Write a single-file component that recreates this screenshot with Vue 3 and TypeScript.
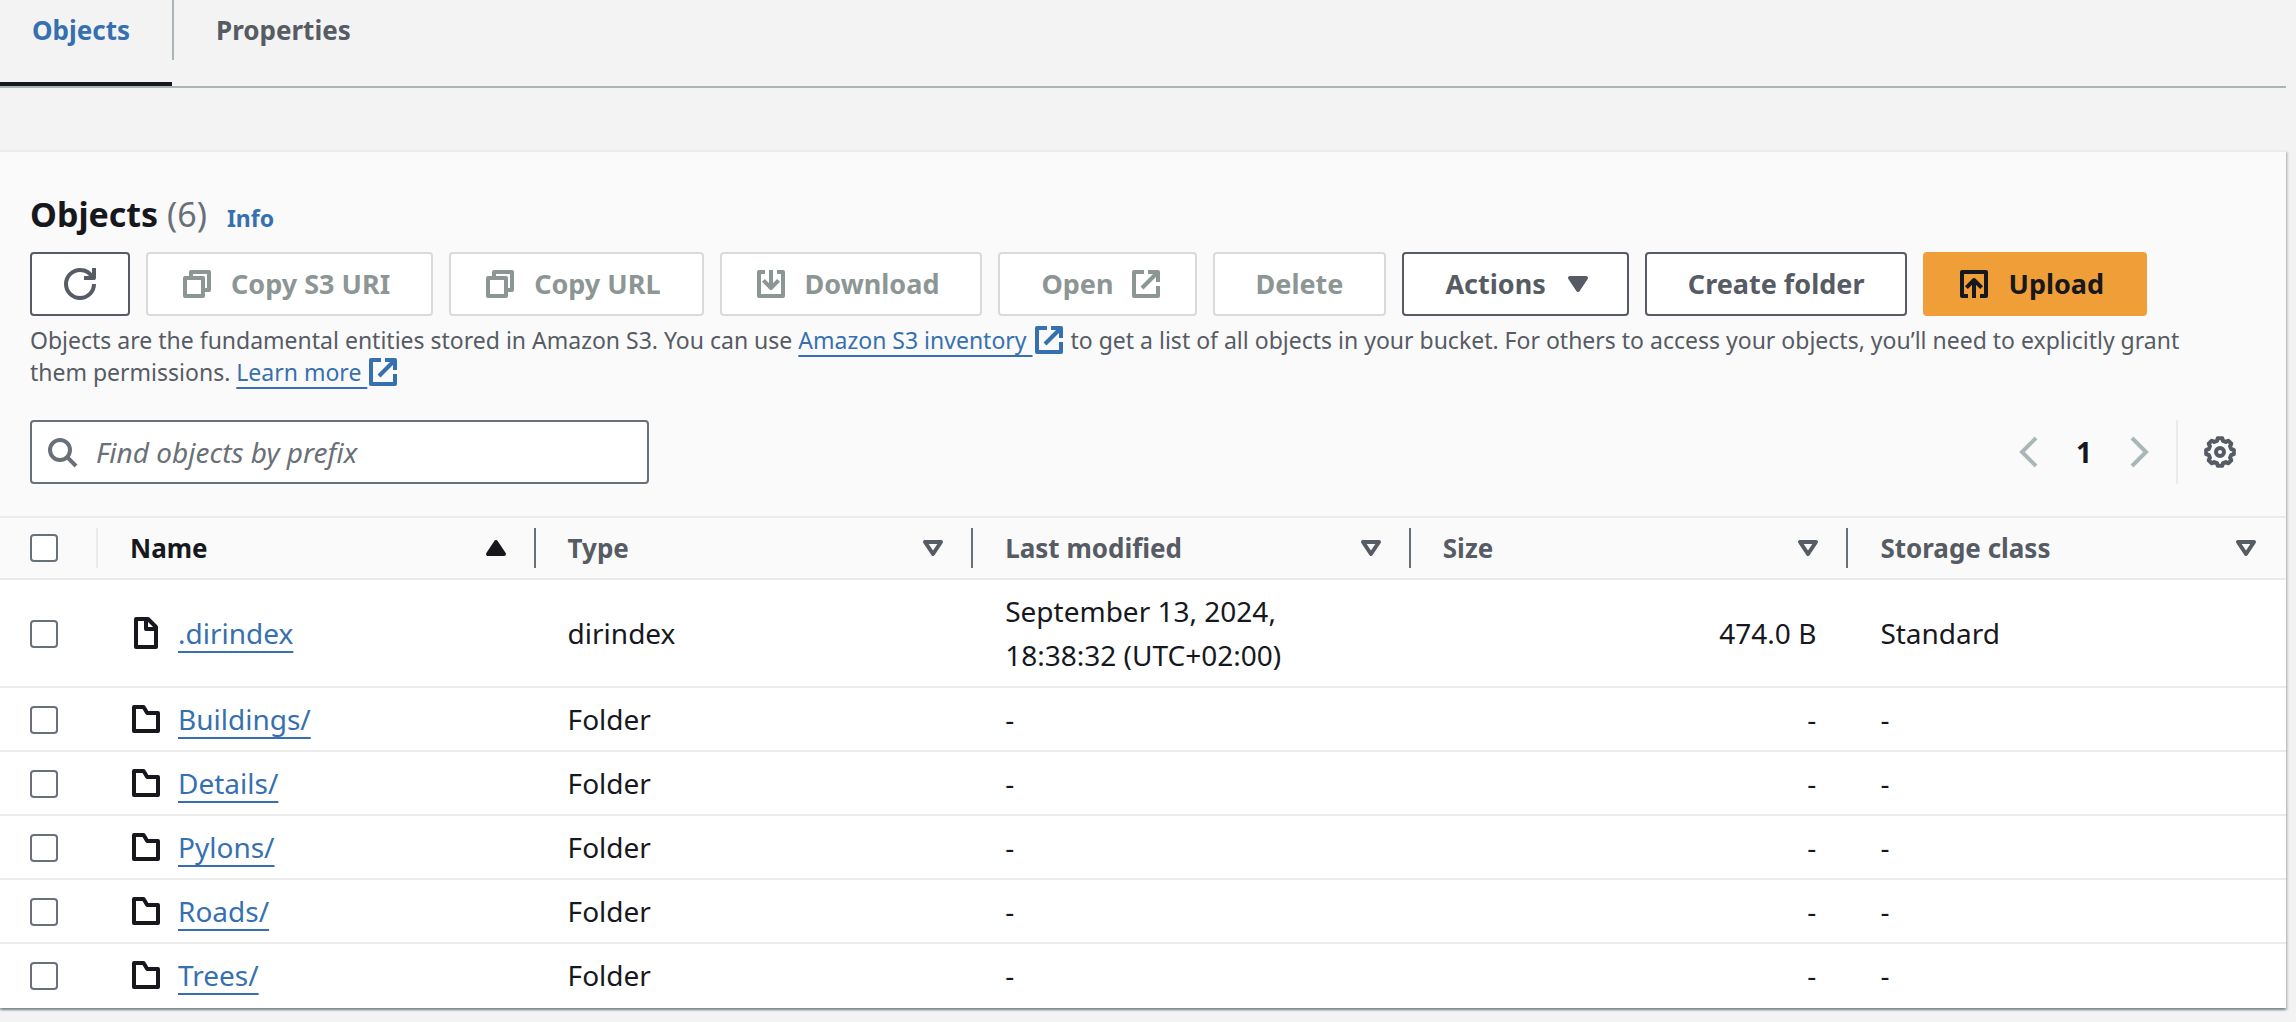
<script setup lang="ts">
import { ref } from 'vue'

interface Shape {
  d: string
  fill?: boolean
}

interface Action {
  label: string
  icon?: string
  trailing?: string
  kind: 'normal' | 'primary'
  disabled?: boolean
}

interface S3Object {
  name: string
  icon: 'file' | 'folder'
  type: string
  modified: string
  size: string
  storage: string
}

/** Outline of an eight-toothed gear centred in the 16-unit icon box. */
function gearPath(): string {
  const points: string[] = []
  const add = (radius: number, degrees: number) => {
    const a = (degrees * Math.PI) / 180
    points.push(`${(8 + radius * Math.cos(a)).toFixed(2)} ${(8 + radius * Math.sin(a)).toFixed(2)}`)
  }
  for (let k = 0; k < 8; k++) {
    const c = k * 45
    add(5.8, c - 15)
    add(7, c - 9)
    add(7, c + 9)
    add(5.8, c + 15)
  }
  return `M${points.join('L')}Z`
}

const icons: Record<string, Shape[]> = {
  refresh: [
    { d: 'M10 5h5V0' },
    { d: 'M15 8a7 7 0 0 1-7 7 7 7 0 0 1-7-7 7 7 0 0 1 7-7 6.9 6.9 0 0 1 6.3 4' },
  ],
  copy: [{ d: 'M2 5h9v9H2z' }, { d: 'M5 5V2h9v9h-3' }],
  download: [{ d: 'M5 2H2v12h12V2h-3' }, { d: 'M8 1v9' }, { d: 'M4.2 6.2 8 10l3.8-3.8' }],
  upload: [{ d: 'M5 14H2V2h12v12h-3' }, { d: 'M8 15V6' }, { d: 'M4.2 9.8 8 6l3.8 3.8' }],
  external: [{ d: 'M7 2H2v12h12V9' }, { d: 'M9 2h5v5' }, { d: 'M6 10l8-8' }],
  caret: [{ d: 'M4 5h8l-4 6z', fill: true }],
  search: [{ d: 'M12 7A5 5 0 1 1 2 7a5 5 0 0 1 10 0z' }, { d: 'M10.6 10.6 15 15' }],
  gear: [{ d: gearPath() }, { d: 'M10 8a2 2 0 1 1-4 0 2 2 0 0 1 4 0z' }],
  prev: [{ d: 'M12 1 5 8l7 7' }],
  next: [{ d: 'M4 1l7 7-7 7' }],
  file: [{ d: 'M3 1h6l4 4v10H3z' }, { d: 'M8 1v5h5' }],
  folder: [{ d: 'M2 2h4.8L8.6 5H14v9H2z' }],
  ascending: [{ d: 'M4 11h8L8 5z', fill: true }],
  sortable: [{ d: 'M4 5h8l-4 6z' }],
}

const tabs = ['Objects', 'Properties']
const activeTab = ref('Objects')

const actions: Action[] = [
  { label: 'Copy S3 URI', icon: 'copy', kind: 'normal', disabled: true },
  { label: 'Copy URL', icon: 'copy', kind: 'normal', disabled: true },
  { label: 'Download', icon: 'download', kind: 'normal', disabled: true },
  { label: 'Open', trailing: 'external', kind: 'normal', disabled: true },
  { label: 'Delete', kind: 'normal', disabled: true },
  { label: 'Actions', trailing: 'caret', kind: 'normal' },
  { label: 'Create folder', kind: 'normal' },
  { label: 'Upload', icon: 'upload', kind: 'primary' },
]

const columns = ['Name', 'Type', 'Last modified', 'Size', 'Storage class']

const folder = (name: string): S3Object => ({
  name,
  icon: 'folder',
  type: 'Folder',
  modified: '-',
  size: '-',
  storage: '-',
})

const objects: S3Object[] = [
  {
    name: '.dirindex',
    icon: 'file',
    type: 'dirindex',
    modified: 'September 13, 2024, 18:38:32 (UTC+02:00)',
    size: '474.0 B',
    storage: 'Standard',
  },
  folder('Buildings/'),
  folder('Details/'),
  folder('Pylons/'),
  folder('Roads/'),
  folder('Trees/'),
]

const query = ref('')
</script>

<template>
  <div class="page">
    <nav class="tabs">
      <a
        v-for="tab in tabs"
        :key="tab"
        href="#"
        class="tab"
        :class="{ active: tab === activeTab }"
        @click.prevent="activeTab = tab"
      >
        <span class="tab-label">{{ tab }}</span>
      </a>
    </nav>

    <main class="card">
      <header class="card-header">
        <div class="title-row">
          <h2>Objects <span class="count">(6)</span></h2>
          <a href="#" class="info">Info</a>
        </div>

        <div class="actions">
          <button type="button" class="btn refresh" aria-label="Refresh">
            <svg class="icon" viewBox="0 0 16 16">
              <path v-for="s in icons.refresh" :key="s.d" :d="s.d" />
            </svg>
          </button>
          <button
            v-for="action in actions"
            :key="action.label"
            type="button"
            class="btn"
            :class="action.kind"
            :disabled="action.disabled"
          >
            <svg v-if="action.icon" class="icon leading" viewBox="0 0 16 16">
              <path v-for="s in icons[action.icon]" :key="s.d" :d="s.d" :class="{ solid: s.fill }" />
            </svg>
            <span>{{ action.label }}</span>
            <svg v-if="action.trailing" class="icon trailing" viewBox="0 0 16 16">
              <path v-for="s in icons[action.trailing]" :key="s.d" :d="s.d" :class="{ solid: s.fill }" />
            </svg>
          </button>
        </div>

        <p class="description">
          Objects are the fundamental entities stored in Amazon S3. You can use
          <a href="#" class="external"><span>Amazon S3 inventory&nbsp;</span><svg class="icon" viewBox="0 0 16 16"><path v-for="s in icons.external" :key="s.d" :d="s.d" /></svg></a>
          to get a list of all objects in your bucket. For others to access your objects, you’ll need to explicitly
          grant them permissions.
          <a href="#" class="external"><span>Learn more&nbsp;</span><svg class="icon" viewBox="0 0 16 16"><path v-for="s in icons.external" :key="s.d" :d="s.d" /></svg></a>
        </p>

        <div class="tools">
          <label class="search">
            <svg class="icon" viewBox="0 0 16 16">
              <path v-for="s in icons.search" :key="s.d" :d="s.d" />
            </svg>
            <input v-model="query" type="text" placeholder="Find objects by prefix" aria-label="Find objects by prefix" />
          </label>
          <div class="pager">
            <button type="button" class="plain arrow" aria-label="Previous page" disabled>
              <svg class="icon" viewBox="0 0 16 16"><path :d="icons.prev[0].d" /></svg>
            </button>
            <button type="button" class="plain current">1</button>
            <button type="button" class="plain arrow" aria-label="Next page" disabled>
              <svg class="icon" viewBox="0 0 16 16"><path :d="icons.next[0].d" /></svg>
            </button>
            <div class="preferences">
              <button type="button" class="plain" aria-label="Preferences">
                <svg class="icon" viewBox="0 0 16 16">
                  <path v-for="s in icons.gear" :key="s.d" :d="s.d" />
                </svg>
              </button>
            </div>
          </div>
        </div>
      </header>

      <table>
        <colgroup>
          <col class="select-col" />
          <col v-for="column in columns" :key="column" />
        </colgroup>
        <thead>
          <tr>
            <th class="select-cell" scope="col">
              <div class="head light"><input type="checkbox" aria-label="Select all objects" /></div>
            </th>
            <th v-for="(column, i) in columns" :key="column" scope="col" :class="{ sorted: i === 0 }">
              <div class="head" :class="{ last: i === columns.length - 1 }">
                <span>{{ column }}</span>
                <svg class="icon" viewBox="0 0 16 16">
                  <path v-if="i === 0" class="solid" :d="icons.ascending[0].d" />
                  <path v-else :d="icons.sortable[0].d" />
                </svg>
              </div>
            </th>
          </tr>
        </thead>
        <tbody>
          <tr v-for="object in objects" :key="object.name">
            <td class="select-cell"><input type="checkbox" :aria-label="'Select ' + object.name" /></td>
            <td>
              <div class="name">
                <svg class="icon" viewBox="0 0 16 16">
                  <path v-for="s in icons[object.icon]" :key="s.d" :d="s.d" />
                </svg>
                <a href="#">{{ object.name }}</a>
              </div>
            </td>
            <td>{{ object.type }}</td>
            <td>{{ object.modified }}</td>
            <td class="size">{{ object.size }}</td>
            <td>{{ object.storage }}</td>
          </tr>
        </tbody>
      </table>
    </main>
  </div>
</template>

<style>
body {
  margin: 0;
  background: #f3f3f3;
}
</style>

<style scoped>
.page {
  padding: 0 10px 14px 0;
  font-family: 'Noto Sans', 'Open Sans', sans-serif;
  font-size: 28px;
  line-height: 44px;
  color: #17181d;
}

a {
  color: #3670b0;
  text-decoration: none;
}

button,
input {
  font: inherit;
  color: inherit;
}

.icon {
  display: block;
  flex: none;
  width: 32px;
  height: 32px;
  overflow: visible;
  fill: none;
  stroke: currentColor;
  stroke-width: 2;
  stroke-linejoin: round;
}

.solid {
  fill: currentColor;
}

/* Tabs */
.tabs {
  display: flex;
  border-bottom: 2px solid #aab7b8;
}

.tab {
  padding-bottom: 22px;
  border-bottom: 4px solid transparent;
  font-size: 26px;
  font-weight: 700;
  line-height: 60px;
  color: #565b64;
}

.tab.active {
  border-bottom-color: #17181d;
  color: #3670b0;
}

.tab-label {
  display: block;
  padding: 0 42px 0 32px;
}

.tab + .tab .tab-label {
  padding-left: 42px;
  border-left: 2px solid #aab7b8;
}

/* Card */
.card {
  margin-top: 62px;
  border-top: 2px solid #ebebeb;
  background: #fff;
  box-shadow:
    0 2px 2px 0 rgba(0, 28, 36, 0.3),
    2px 2px 2px 0 rgba(0, 28, 36, 0.15),
    -2px 2px 2px 0 rgba(0, 28, 36, 0.15);
}

.card-header {
  padding: 40px 40px 32px 30px;
  background: #fafafa;
}

.title-row {
  display: flex;
  align-items: baseline;
  gap: 20px;
}

h2 {
  margin: 0;
  font-size: 34px;
  font-weight: 700;
  line-height: 44px;
}

.count {
  font-weight: 400;
  color: #6a7077;
}

.info {
  font-size: 23px;
  font-weight: 700;
  line-height: 32px;
}

.actions {
  display: flex;
  flex-wrap: wrap;
  gap: 16px;
  margin-top: 16px;
}

.btn {
  display: flex;
  align-items: center;
  gap: 16px;
  box-sizing: border-box;
  height: 64px;
  padding: 0 41px;
  border: 2px solid #565b64;
  border-radius: 4px;
  background: #fff;
  font-size: 27px;
  font-weight: 700;
  line-height: 40px;
  color: #565b64;
}

.btn:disabled {
  border-color: #d8dbda;
  color: #8c9694;
}

.btn.primary {
  border-color: #f09e38;
  background: #f09e38;
  color: #17181d;
}

.btn.refresh {
  padding: 0 32px;
}

.leading {
  margin: 0 2px 0 -8px;
}

.trailing {
  margin-right: -8px;
}

.description {
  margin: 8px 0 0;
  padding-right: 16px;
  font-size: 23px;
  line-height: 32px;
  color: #565b64;
}

.external span {
  text-decoration: underline;
  text-decoration-thickness: 2px;
  text-decoration-skip-ink: none;
  text-underline-offset: 6px;
}

.external .icon {
  display: inline-block;
  margin: -4px 0;
  vertical-align: -3px;
}

.tools {
  display: flex;
  align-items: center;
  justify-content: space-between;
  margin-top: 32px;
}

.search {
  display: flex;
  align-items: center;
  gap: 18px;
  box-sizing: border-box;
  width: 100%;
  max-width: 619px;
  height: 64px;
  padding: 0 14px;
  border: 2px solid #6a7077;
  border-radius: 4px;
  background: #fff;
  color: #6a7077;
}

.search input {
  flex: 1;
  min-width: 0;
  padding: 0;
  border: 0;
  outline: 0;
  background: none;
  color: #17181d;
}

.search input::placeholder {
  font-style: italic;
  color: #6a7077;
  opacity: 1;
}

.pager {
  display: flex;
  align-items: center;
}

.plain {
  padding: 0;
  border: 0;
  background: none;
}

.arrow {
  color: #aab7b8;
}

.arrow .icon {
  stroke-linejoin: miter;
}

.current {
  width: 80px;
  font-weight: 700;
}

.preferences {
  display: flex;
  align-items: center;
  height: 64px;
  margin-left: 20px;
  padding: 0 10px 0 26px;
  border-left: 2px solid #ebebeb;
  color: #565b64;
}

/* Table */
table {
  width: 100%;
  table-layout: fixed;
  border-collapse: separate;
  border-spacing: 0;
}

.select-col {
  width: 98px;
}

th {
  height: 60px;
  padding: 0;
  border-top: 2px solid #ebebeb;
  border-bottom: 2px solid #ebebeb;
  background: #fafafa;
  font-size: 26px;
  font-weight: 700;
  line-height: 40px;
  text-align: left;
  color: #565b64;
}

.sorted {
  color: #17181d;
}

.head {
  display: flex;
  align-items: center;
  justify-content: space-between;
  box-sizing: border-box;
  height: 40px;
  padding: 0 22px 0 32px;
  border-right: 2px solid #6a7077;
}

.head.light {
  padding: 0 0 0 30px;
  border-color: #ebebeb;
}

.head.last {
  padding-right: 24px;
  border-right: 0;
}

td {
  padding: 9px 32px;
  border-bottom: 2px solid #ebebeb;
}

tr:last-child td {
  border-bottom-color: transparent;
}

td.select-cell {
  padding: 2px 0 0 30px;
}

.size {
  text-align: right;
}

input[type='checkbox'] {
  display: block;
  box-sizing: border-box;
  width: 28px;
  height: 28px;
  margin: 0;
  appearance: none;
  border: 2px solid #6a7077;
  border-radius: 4px;
  background: #fff;
}

input[type='checkbox']:checked {
  background: #3670b0;
}

.name {
  display: flex;
  align-items: center;
  gap: 16px;
}

.name a {
  text-decoration: underline;
  text-decoration-thickness: 2px;
  text-decoration-skip-ink: none;
  text-underline-offset: 7px;
}
</style>
